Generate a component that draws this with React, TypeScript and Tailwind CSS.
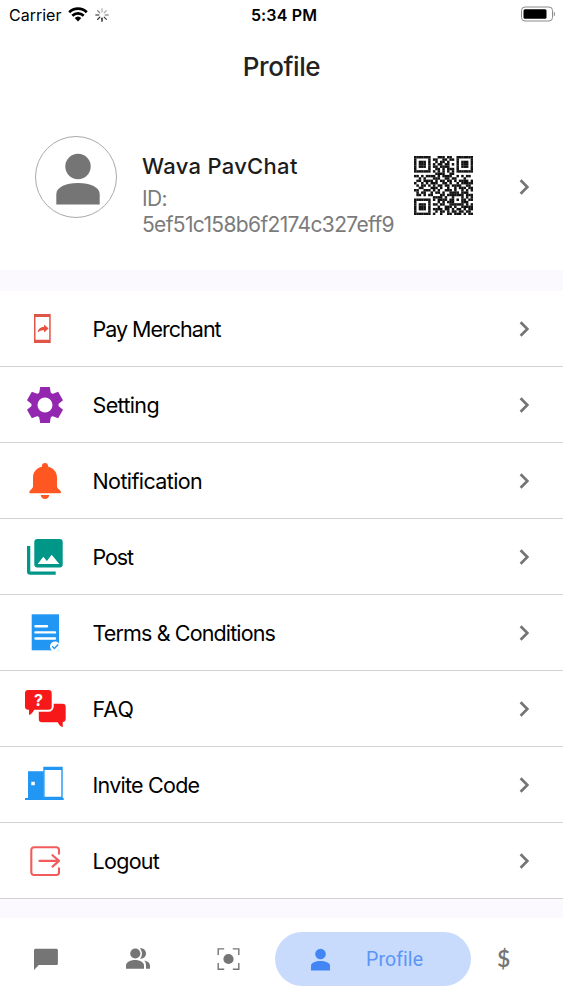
import type { ReactNode } from 'react';

// --- QR ---
const QR_ROWS = [
  '1111111000111011001111111',
  '1000001011001101101000001',
  '1011101001011010001011101',
  '1011101010110110101011101',
  '1011101011011110001011101',
  '1000001001101011101000001',
  '1111111010101010101111111',
  '0000000001111001100000000',
  '1101011110101111001010110',
  '0010100011100110110001000',
  '0110111101011011010111101',
  '1001010111001101001011111',
  '0101101010110110111100110',
  '0011000111010010010111011',
  '1100111010100111010010101',
  '0101100101101001111011100',
  '0110101100011011111110111',
  '0000000011110100100010101',
  '1111111010111101101011011',
  '1000001000101011100011100',
  '1011101011011001111110101',
  '1011101000100111010011111',
  '1011101011110110101101011',
  '1000001001011010110110110',
  '1111111010010011011101011',
];

function QrCode() {
  return (
    <svg className="h-[59px] w-[59px]" viewBox="0 0 25 25" fill="#111">
      {QR_ROWS.map((row, y) =>
        row.split('').map((c, x) => (c === '1' ? <rect key={`${x}-${y}`} x={x} y={y} width="1.05" height="1.05" /> : null))
      )}
    </svg>
  );
}

function Chevron() {
  return (
    <svg className="h-4 w-[10px] shrink-0" viewBox="0 0 10 16" fill="none" stroke="#757575" strokeWidth="2.7">
      <path d="M1.6 1.2 8.400 8l-6.8 6.8" />
    </svg>
  );
}

// --- MENU ICONS (44x44) ---
const payIcon = (
  <>
    <path fill="#df5548" fillRule="evenodd" d="M11 7h16.7v29H11zM12.5 10v22.8h13.7V10z" />
    <path fill="#e8503f" d="M14.6 25.4c.5-3.7 3.2-5.5 6.5-5.5v-2.3l4.5 4-4.5 4v-2.4c-2.6 0-4.7.6-6.5 2.2z" />
  </>
);

const settingIcon = (
  <>
    <g fill="#9427b0">
      <circle cx="22" cy="22" r="13.5" />
      <path d="M17.2 4h9.6l1.2 7v22l-1.2 7h-9.6L16 33V11z" />
      <path d="M17.2 4h9.6l1.2 7v22l-1.2 7h-9.6L16 33V11z" transform="rotate(60 22 22)" />
      <path d="M17.2 4h9.6l1.2 7v22l-1.2 7h-9.6L16 33V11z" transform="rotate(120 22 22)" />
    </g>
    <circle cx="22" cy="22" r="7.5" fill="#fff" />
  </>
);

const bellIcon = (
  <g fill="#ff5722">
    <path d="M22 4c-1.8 0-3.1 1.3-3.1 3.1v.7C13.3 9.1 10 13.3 10 18.5v9.3c0 1.4-3.7 3.9-3.7 5.3 0 .8.3 1.200.9 1.200h29.900c.6 0 .9-.4.9-1.200 0-1.400-4-3.900-4-5.300v-9.300c0-5.200-3.300-9.400-8.900-10.700v-.7C25.100 5.300 23.800 4 22 4z" />
    <path d="M17.7 36h8.6c-.4 2.5-2.1 4-4.300 4s-3.900-1.500-4.300-4z" />
  </g>
);

const postIcon = (
  <>
    <rect x="11.3" y="4" width="28.4" height="28.4" rx="3" fill="#009688" />
    <path fill="#fff" d="m14.7 29 5.6-7.200 3.600 4.200 4.800-6.200 7.600 9.200z" />
    <path fill="#009688" d="M4 11h3.300v25.400h25.400v3.300H7.200A3.200 3.200 0 0 1 4 36.500z" />
  </>
);

const termsIcon = (
  <>
    <rect x="8.7" y="3.3" width="27.3" height="36" fill="#2196f3" />
    <path d="M12.500 15.300H24M12.500 21.400H32M12.500 27.500H32" stroke="#fff" strokeWidth="2.4" strokeLinecap="round" />
    <circle cx="32" cy="35.5" r="5" fill="#fff" />
    <path d="m29.200 35.300 2.200 2.200 3.800-4" stroke="#2196f3" strokeWidth="1.4" fill="none" />
  </>
);

const faqIcon = (
  <>
    <path fill="#f71919" d="M18 16.700h21.500a3.200 3.200 0 0 1 3.200 3.200v12.200c0 1.700-1.400 3-3 3.200v5c-2.200-.8-3.700-2.400-5-5H19a3.200 3.200 0 0 1-3.200-3.200V19.900z" />
    <path fill="#f71919" stroke="#fff" strokeWidth="4" paintOrder="stroke" d="M5.200 3h20.300a3.200 3.200 0 0 1 3.200 3.200v13.400a3.200 3.200 0 0 1-3.200 3.200H11.200c-1.200 2.500-2.700 4.300-5.200 5.300v-5.300h-.8A3.200 3.200 0 0 1 2 19.600V6.200A3.200 3.200 0 0 1 5.200 3z" />
    <text x="15.4" y="18.8" textAnchor="middle" className="fill-white font-['Inter',sans-serif] text-[16px] font-bold">?</text>
  </>
);

const inviteIcon = (
  <g fill="#2196f3">
    <path fillRule="evenodd" d="M5 8.300h15.700V36H5zM8.300 18.800v3.500h3.500v-3.500z" />
    <path fillRule="evenodd" d="M20.300 3.700h19.400V37H20.300zM21.600 7v26.800h16.700V7z" />
    <path d="M2 35h38.700v2H2z" />
  </g>
);

const logoutIcon = (
  <g fill="none" stroke="#f15b5b" strokeWidth="2.1" strokeLinecap="round" strokeLinejoin="round">
    <path d="M36 14.800V11a2.700 2.700 0 0 0-2.700-2.700H11A2.700 2.700 0 0 0 8.300 11v22.300A2.700 2.700 0 0 0 11 36h22.300a2.700 2.700 0 0 0 2.700-2.700v-4" />
    <path d="M16.500 21.900H36M29.500 16.200l6.500 5.700-6.500 5.700" />
  </g>
);

const menuItems: { label: string; icon: ReactNode; tracking: string }[] = [
  { label: 'Pay Merchant', icon: payIcon, tracking: 'tracking-[-1px]' },
  { label: 'Setting', icon: settingIcon, tracking: 'tracking-[-0.65px]' },
  { label: 'Notification', icon: bellIcon, tracking: 'tracking-[-0.6px]' },
  { label: 'Post', icon: postIcon, tracking: 'tracking-[-1.1px]' },
  { label: 'Terms & Conditions', icon: termsIcon, tracking: 'tracking-[-0.87px]' },
  { label: 'FAQ', icon: faqIcon, tracking: 'tracking-[0.1px]' },
  { label: 'Invite Code', icon: inviteIcon, tracking: 'tracking-[-0.75px]' },
  { label: 'Logout', icon: logoutIcon, tracking: 'tracking-[-0.7px]' },
];

function StatusBar() {
  return (
    <div className="grid h-[30px] grid-cols-3 items-center pr-2 pl-[9px] text-black">
      <div className="flex items-center pb-px">
        <span className="w-[59px] text-[16px]">Carrier</span>
        <svg className="h-[15px] w-5" viewBox="0 0 20 15">
          <g fill="none" stroke="#000" strokeWidth="2.7">
            <path d="M1.200 5.300a12.600 12.600 0 0 1 17.600 0" />
            <path d="M4.300 8.700a8.200 8.200 0 0 1 11.400 0" />
          </g>
          <path d="M6.700 11.100a4.800 4.800 0 0 1 6.600 0L10 14.500z" />
        </svg>
        <svg className="ml-[7px] h-[14px] w-[14px]" viewBox="-7 -7 14 14" stroke="#000" strokeWidth="1.3" strokeLinecap="round">
          {[0.3, 0.3, 0.4, 0.7, 0.95, 0.8, 0.6, 0.45].map((opacity, i) => (
            <path key={i} d="M0-3.200v-3" opacity={opacity} transform={`rotate(${i * 45})`} />
          ))}
        </svg>
      </div>
      <p className="pb-px pl-1 text-center text-[16px] font-semibold tracking-[0.15px]">5:34 PM</p>
      <svg className="mb-0.5 h-4 w-[35px] justify-self-end" viewBox="0 0 35 16">
        <rect x="1.5" y="1" width="31" height="14" rx="3.5" fill="#fff" stroke="#8a8a8a" />
        <rect x="3.5" y="3.2" width="23" height="9.6" rx="1.5" />
        <path d="M33.800 5.500c1.600.7 1.600 4.300 0 5z" fill="#8a8a8a" />
      </svg>
    </div>
  );
}

function BottomNav() {
  return (
    <nav className="flex h-[82px] items-center pl-[34px] text-[#757575]">
      <svg className="h-[22px] w-6" viewBox="0 0 24 22" fill="currentColor">
        <path d="M1.800.7h20.400c1 0 1.700.7 1.700 1.600v13.200c0 .9-.7 1.600-1.700 1.600H4.800L0 22V2.300C0 1.400.8.700 1.800.7z" />
      </svg>
      <svg className="ml-[68px] h-[22px] w-6" viewBox="0 0 24 22" fill="currentColor">
        <circle cx="9.3" cy="5.5" r="5.1" />
        <path d="M0 20.700v-3.200c0-3.300 4.500-5.400 9-5.400s9 2.100 9 5.400v3.200z" />
        <path d="M14 .4c3.200-.5 6 1.900 6 5.100s-2.800 5.600-6 5.100c2.600-2.800 2.600-7.400 0-10.200zM18.200 12.600c3.400.7 5.800 2.400 5.800 4.900v3.200h-4v-3.200c0-1.900-.6-3.500-1.800-4.900z" />
      </svg>
      <svg className="ml-[67px] h-[22px] w-[23px]" viewBox="0 0 23 22" fill="currentColor">
        <circle cx="11.5" cy="11" r="5.1" />
        <path fill="none" stroke="currentColor" strokeWidth="1.4" d="M1.200 7V.9h6M15.800.9h6V7M21.800 15v6.200h-6M7.200 21.200h-6V15" />
      </svg>
      <div className="ml-[35px] flex h-[54px] w-[196px] items-center rounded-full bg-[#c8dbfd] pl-9 text-[#4285f4]">
        <svg className="h-[23px] w-[19px]" viewBox="0 0 19 23" fill="currentColor">
          <circle cx="9.5" cy="6" r="5.3" />
          <path d="M0 22.500v-5c0-2.600 4.700-4.500 9.500-4.500s9.500 1.900 9.500 4.500v5z" />
        </svg>
        <span className="ml-9 pt-px font-['Roboto',sans-serif] text-[19.5px] tracking-[0.1px] text-[#5b96f5]">Profile</span>
      </div>
      <span className="mb-0.5 ml-[26px] font-['Lato',sans-serif] text-[23px] leading-none font-semibold">$</span>
    </nav>
  );
}

export default function App() {
  return (
    <div className="flex h-[1000px] w-[563px] flex-col overflow-hidden bg-white font-['Inter',sans-serif]">
      <StatusBar />
      <h1 className="pt-[18px] text-center text-[26px] leading-[37px] font-medium tracking-[-0.4px] text-[#222]">Profile</h1>

      {/* USER */}
      <section className="flex h-[185px] items-start pt-[51px] pl-[35px]">
        <div className="flex h-[82px] w-[82px] shrink-0 items-center justify-center rounded-full border border-[#aaa]">
          <svg className="mt-1 ml-[3px] h-[52px] w-[44px]" viewBox="0 0 44 52" fill="#757575">
            <circle cx="22" cy="13.5" r="12.7" />
            <path d="M.3 51.500V41c0-6.500 9-11 21.700-11s21.700 4.500 21.700 11v10.500z" />
          </svg>
        </div>
        <div className="ml-[25px] w-[272px] pt-4">
          <h2 className="text-[22px] leading-7 font-medium tracking-[0.3px] text-[#1c1c1c]">Wava PavChat</h2>
          <p className="mt-[6px] text-[21px] leading-[26px] tracking-[-0.65px] whitespace-nowrap text-[#7b7b7b]">
            ID:<br />5ef51c158b6f2174c327eff9
          </p>
        </div>
        <div className="mt-5 flex items-center">
          <QrCode />
          <div className="ml-[46px] pt-0.5"><Chevron /></div>
        </div>
      </section>

      <div className="h-[21px] shrink-0 bg-[#fbf9fd]"></div>

      {/* MENU */}
      <ul>
        {menuItems.map(item => (
          <li key={item.label} className="flex h-[76px] items-center border-b border-[#d2d2d2] pt-px pr-[34px] pl-[23px]">
            <svg className="h-11 w-11 shrink-0" viewBox="0 0 44 44">{item.icon}</svg>
            <span className={`ml-[25.5px] flex-1 text-[21.5px] text-black ${item.tracking}`}>{item.label}</span>
            <Chevron />
          </li>
        ))}
      </ul>

      <div className="h-[19px] shrink-0 bg-[#fbf9fd]"></div>
      <BottomNav />
    </div>
  );
}
